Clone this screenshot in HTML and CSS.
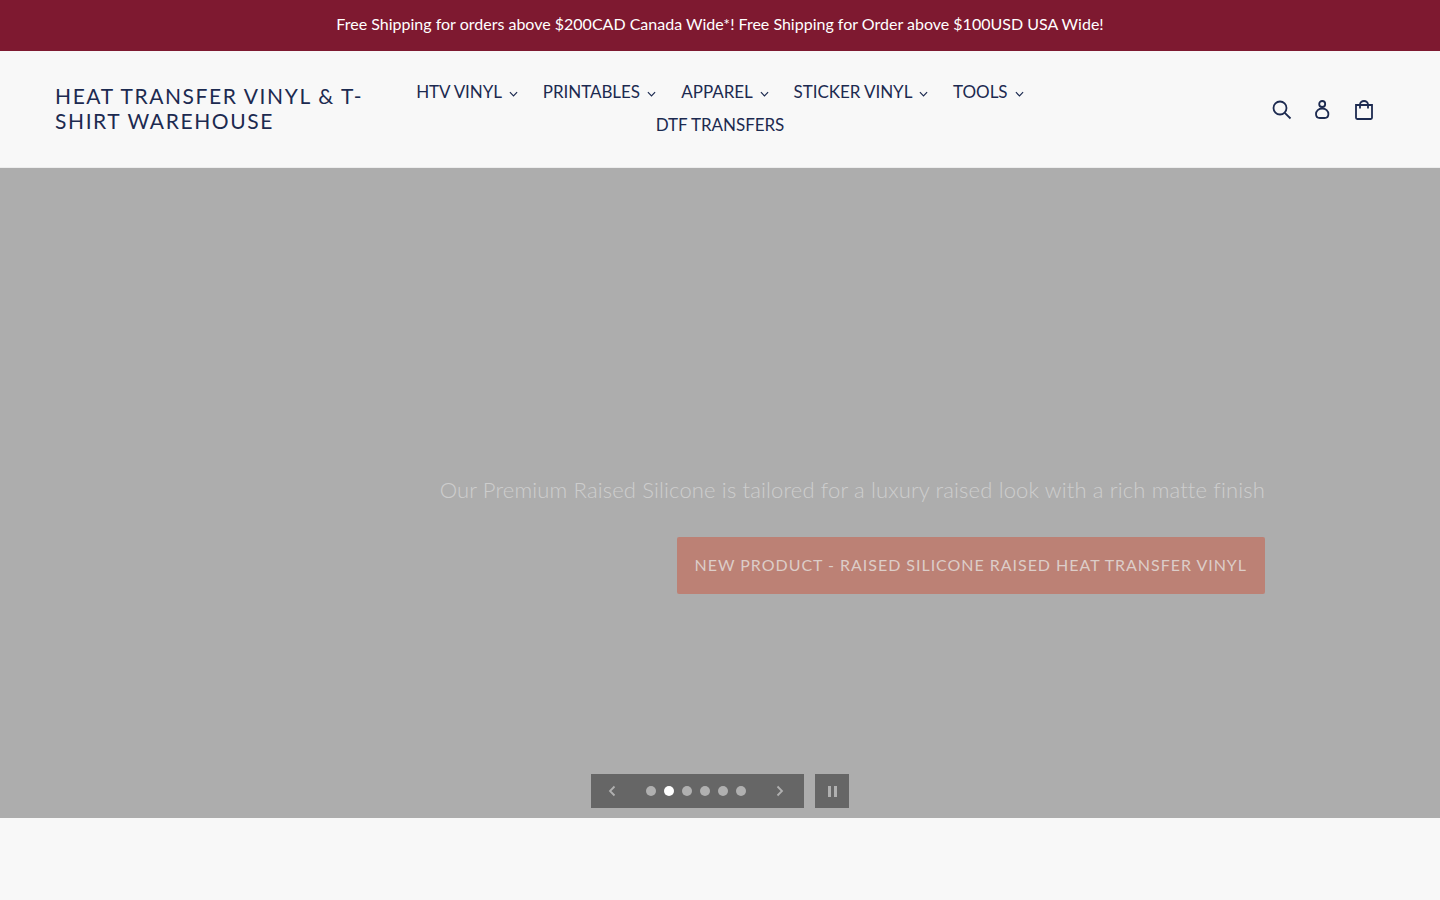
FILE: index.html
```html
<!DOCTYPE html>
<html lang="en">
<head>
    <meta charset="UTF-8">
    <meta name="viewport" content="width=device-width, initial-scale=1.0">
    <title>Heat Transfer Vinyl &amp; T-Shirt Warehouse</title>
    <link rel="stylesheet" href="styles.css">
</head>
<body>
    <div class="announcement">Free Shipping for orders above $200CAD Canada Wide*! Free Shipping for Order above $100USD USA Wide!</div>

    <header class="site-header">
        <a href="#" class="logo">HEAT TRANSFER VINYL &amp; T-SHIRT WAREHOUSE</a>
        <nav class="main-nav">
            <a href="#">HTV VINYL <svg class="caret" viewBox="0 0 10 6"><path d="M1 1l4 4 4-4"/></svg></a>
            <a href="#">PRINTABLES <svg class="caret" viewBox="0 0 10 6"><path d="M1 1l4 4 4-4"/></svg></a>
            <a href="#">APPAREL <svg class="caret" viewBox="0 0 10 6"><path d="M1 1l4 4 4-4"/></svg></a>
            <a href="#">STICKER VINYL <svg class="caret" viewBox="0 0 10 6"><path d="M1 1l4 4 4-4"/></svg></a>
            <a href="#">TOOLS <svg class="caret" viewBox="0 0 10 6"><path d="M1 1l4 4 4-4"/></svg></a>
            <a href="#">DTF TRANSFERS</a>
        </nav>
        <div class="header-icons">
            <a href="#" aria-label="Search">
                <svg class="icon" viewBox="0 0 20 20"><circle cx="8" cy="8" r="6.500"/><path d="M12.800 12.800L18.500 18.500"/></svg>
            </a>
            <a href="#" aria-label="Log in">
                <svg class="icon" viewBox="0 0 20 20"><circle cx="9.200" cy="4" r="3"/><path d="M9.200 8.500c-3.600 0-6.200 2.500-6.200 5.500 0 2.600 1.800 4 3.800 4h4.800c2 0 3.800-1.400 3.800-4 0-3-2.600-5.500-6.200-5.500z"/></svg>
            </a>
            <a href="#" aria-label="Cart">
                <svg class="icon" viewBox="0 0 20 20"><path d="M2 5h16v12.800c0 .7-.5 1.200-1.200 1.200H3.200c-.7 0-1.200-.5-1.200-1.200z"/><path d="M6 8.500V4.500C6 2.500 7.800 1 10 1s4 1.500 4 3.500v4"/></svg>
            </a>
        </div>
    </header>

    <section class="hero">
        <div class="hero-content">
            <p class="hero-text">Our Premium Raised Silicone is tailored for a luxury raised look with a rich matte finish</p>
            <a href="#" class="hero-btn">NEW PRODUCT - RAISED SILICONE RAISED HEAT TRANSFER VINYL</a>
        </div>
        <div class="slider-controls">
            <div class="slider-nav">
                <svg class="arrow" viewBox="0 0 8 12"><path d="M6.500 1.500L2 6l4.500 4.500"/></svg>
                <div class="dots">
                    <span class="dot"></span>
                    <span class="dot active"></span>
                    <span class="dot"></span>
                    <span class="dot"></span>
                    <span class="dot"></span>
                    <span class="dot"></span>
                </div>
                <svg class="arrow" viewBox="0 0 8 12"><path d="M1.500 1.500L6 6l-4.500 4.500"/></svg>
            </div>
            <div class="slider-pause">
                <span class="bar"></span>
                <span class="bar"></span>
            </div>
        </div>
    </section>

    <div class="below"></div>
</body>
</html>
```

FILE: styles.css
```css
body {
    font-family: "Lato", "Noto Sans", sans-serif;
    margin: 0;
    padding: 0;
    background: #f8f8f8;
    color: #1c2a50;
}
a {
    color: inherit;
    text-decoration: none;
}
.announcement {
    background: #7e1930;
    color: #fff;
    height: 51px;
    padding-bottom: 5px;
    box-sizing: border-box;
    display: flex;
    align-items: center;
    justify-content: center;
    font-size: 16px;
}
.site-header {
    height: 116px;
    border-bottom: 1px solid #ededed;
    padding: 0 55px;
    display: grid;
    grid-template-columns: 322px 1fr 322px;
    align-items: center;
}
.logo {
    font-size: 21px;
    line-height: 25px;
    letter-spacing: 1.600px;
    padding-bottom: 2px;
}
.main-nav {
    display: flex;
    flex-wrap: wrap;
    justify-content: center;
    column-gap: 25px;
    padding: 0 20px 2px;
    font-size: 17px;
    line-height: 33px;
    letter-spacing: -0.050px;
}
.caret {
    width: 9px;
    height: 6px;
    margin-left: 3px;
    vertical-align: 1px;
    fill: none;
    stroke: #1c2a50;
    stroke-width: 1.300;
}
.header-icons {
    display: flex;
    justify-content: flex-end;
    align-items: center;
    gap: 21px;
    padding: 1px 11px 0 0;
}
.header-icons a {
    display: flex;
}
.icon {
    width: 20px;
    height: 20px;
    fill: none;
    stroke: #1c2a50;
    stroke-width: 1.800;
}
.hero {
    position: relative;
    height: 650px;
    background: #adadad;
    display: flex;
    justify-content: flex-end;
}
.hero-content {
    padding: 307px 175px 0 0;
    display: flex;
    flex-direction: column;
    align-items: flex-end;
}
.hero-text {
    margin: 0 0 32px;
    font-size: 22px;
    line-height: 30px;
    font-weight: 300;
    letter-spacing: 0.150px;
    color: #cdcdcd;
}
.hero-btn {
    background: #bc8175;
    color: #dccdc8;
    height: 57px;
    padding: 0 18px 2px;
    box-sizing: border-box;
    display: flex;
    align-items: center;
    border-radius: 2px;
    font-size: 16px;
    letter-spacing: 0.970px;
}
.slider-controls {
    position: absolute;
    left: 591px;
    bottom: 10px;
    display: flex;
    gap: 11px;
}
.slider-nav {
    width: 213px;
    height: 34px;
    background: #666;
    display: flex;
    align-items: center;
    justify-content: space-between;
    padding: 0 20px 0 17px;
    box-sizing: border-box;
}
.arrow {
    width: 8px;
    height: 12px;
    fill: none;
    stroke: #b0b0b0;
    stroke-width: 1.800;
}
.dots {
    display: flex;
    gap: 8px;
}
.dot {
    width: 10px;
    height: 10px;
    border-radius: 50%;
    background: #b0b0b0;
}
.dot.active {
    background: #fff;
}
.slider-pause {
    width: 34px;
    height: 34px;
    background: #666;
    display: flex;
    align-items: center;
    justify-content: center;
    gap: 3px;
}
.bar {
    width: 3px;
    height: 11px;
    background: #b0b0b0;
}
.below {
    height: 82px;
}
```
